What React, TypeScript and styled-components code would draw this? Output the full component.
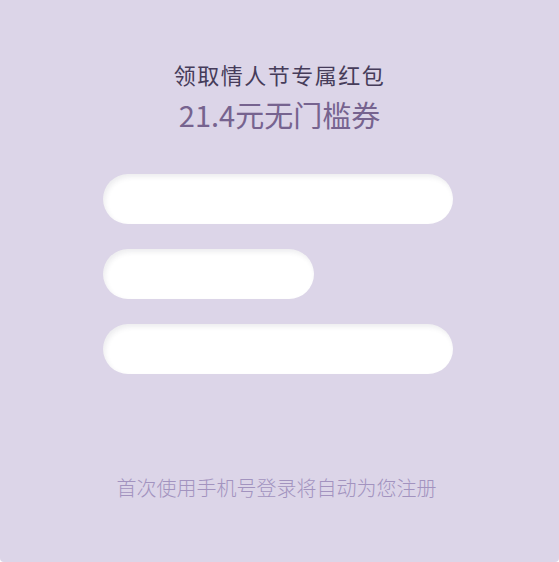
import React from "react";
import styled, { createGlobalStyle } from "styled-components";

const Global = createGlobalStyle`
  html, body { margin: 0; padding: 0; background: #ffffff; }
  * { box-sizing: border-box; }
`;

const Card = styled.div`
  width: 559px;
  height: 562px;
  background: #dcd5e8;
  border-radius: 0 0 4px 4px;
  display: flex;
  flex-direction: column;
  align-items: center;
  font-family: "Noto Sans CJK SC", "Noto Sans", sans-serif;
  padding-top: 58px;
`;

const Title = styled.div`
  font-size: 22px;
  line-height: 32px;
  color: #463c5a;
  letter-spacing: 1.5px;
  font-weight: 400;
`;

const Amount = styled.div`
  font-size: 29px;
  line-height: 40px;
  color: #76638f;
  margin-top: 4px;
  font-weight: 400;
`;

const Form = styled.div`
  width: 350px;
  margin-top: 40px;
  margin-right: 3px;
  display: flex;
  flex-direction: column;
  gap: 25px;
`;

const Field = styled.div<{ $w: number }>`
  width: ${(p) => p.$w}px;
  height: 50px;
  border-radius: 25px;
  background: #ffffff;
  box-shadow: inset 2px 3px 5px rgba(60, 50, 80, 0.09);
`;

const Note = styled.div`
  margin-top: 99px;
  margin-right: 6px;
  font-size: 20px;
  line-height: 30px;
  color: #a293bf;
  font-weight: 300;
`;

export default function App() {
  return (
    <>
      <Global />
      <Card>
        <Title>领取情人节专属红包</Title>
        <Amount>21.4元无门槛券</Amount>
        <Form>
          <Field $w={350} />
          <Field $w={211} />
          <Field $w={350} />
        </Form>
        <Note>首次使用手机号登录将自动为您注册</Note>
      </Card>
    </>
  );
}
